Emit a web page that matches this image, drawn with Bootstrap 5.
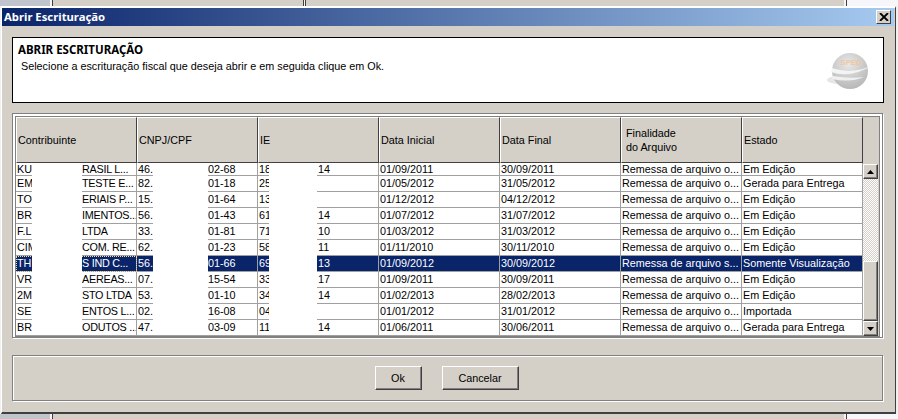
<!DOCTYPE html>
<html lang="pt-BR">
  <head>
    <meta charset="UTF-8" />
    <meta name="viewport" content="width=device-width, initial-scale=1" />
    <title>Abrir Escrituração</title>
    <link href="https://cdn.jsdelivr.net/npm/bootstrap@5.3.3/dist/css/bootstrap.min.css" rel="stylesheet" />
    <style>
      html, body { height: 419px; overflow: hidden; }
      body { background: #f0f0f0; font-family: "Liberation Sans", Arial, sans-serif; font-size: 10.8px; color: #000; }

      /* what is left of the app behind the dialog */
      .behind { height: 6px; }
      .behind-low { height: 5px; }
      .seg-blue { width: 50px; background: #c0c4cc; }
      .seg-light { width: 2px; background: #f4f4f4; }
      .seg-dark { width: 1px; background: #404040; }
      .seg-fill { width: 250px; background: #d4d0c8; }
      .seg-gap { width: 1px; background: #f4f4f4; }
      .seg-rest { flex: 1; background: #d4d0c8; }
      .seg-white { width: 51px; background: #f6f6fa; }

      .dlg { height: 408px; margin: 0 2px 0 1px; background: #d4d0c8; border-top: 2px solid #fff; border-right: 1px solid #404040; border-bottom: 2px solid #404040; border-left: 1px solid #fff; }
      .dlg-title { height: 18px; margin-right: 1px; background: linear-gradient(90deg, #0a246a, #a6caf0); padding-left: 2px; padding-right: 3px; }
      .dlg-title-text { color: #fff; font-family: "Noto Sans", sans-serif; font-weight: 700; font-size: 11.3px; line-height: 18px; }
      .btn-x { width: 15px; height: 14px; background: #d4d0c8; border: 1px solid; border-color: #fff #404040 #404040 #fff; }

      .dlg-body { padding: 11px 11px 0 10px; }

      .head-box { height: 66px; background: #fff; border: 1px solid #000; padding: 5px 5px 0; }
      .head-title { font-family: "Noto Sans", sans-serif; font-weight: 700; font-size: 11.5px; line-height: 14px; }
      .head-text { line-height: 14px; padding-left: 3px; margin-top: 2px; }
      .head-logo { width: 48px; height: 40px; margin: 8px 4px 0 0; }

      .grid-frame { margin: 10px 1px 0 0; height: 225px; border: 1px solid #808080; box-shadow: inset 1px 1px 0 #fff, 1px 1px 0 #fff; padding: 2px 2px 0; position: relative; background: #fff; }
      .grid-wrap { display: flex; height: 221px; background: #d4d0c8; border: 1px solid #808080; }
      .grid-tbl { table-layout: fixed; width: 847px; height: 219px; border-collapse: separate; border-spacing: 0; background: #fff; }
      .grid-tbl th { width: 121px; height: 46px; background: #d4d0c8; font-weight: 400; padding: 0 1px; border: 1px solid; border-color: #fff #404040 #404040 #fff; line-height: 14px; }
      .grid-tbl td { height: 16px; padding: 0 0 0 1px; line-height: 15px; border-right: 1px solid #a0a0a0; border-bottom: 1px solid #a0a0a0; white-space: nowrap; overflow: hidden; }
      .grid-tbl tr.first-row td { height: 13px; line-height: 4px; }
      .grid-tbl tr.sel td { background: #0a246a; color: #fff; }
      .grid-tbl tr.sel td:first-child { outline: 1px dotted #f5db95; outline-offset: -1px; }
      .cell-split { display: flex; justify-content: space-between; }
      .pre-a { padding-left: 1px; }
      .post-a { width: 54px; letter-spacing: -0.25px; }
      .post-b { width: 49px; }
      .post-c { width: 60px; }

      /* masked columns, they lie over the rows */
      .mask { position: absolute; top: 49px; height: 172px; background: #fff; }
      .mask-a { left: 19px; width: 50px; }
      .mask-b { left: 140px; width: 55px; }
      .mask-c { left: 256px; width: 48px; }

      .vscroll { width: 15px; margin-top: 47px; display: flex; flex-direction: column; }
      .vs-btn { height: 15px; flex: none; background: #d4d0c8; border: 1px solid; border-color: #fff #404040 #404040 #fff; box-shadow: inset -1px -1px 0 #808080; display: flex; align-items: center; justify-content: center; }
      .vs-track { height: 82px; flex: none; background-color: #fff; background-image: conic-gradient(#d4d0c8 25%, #fff 0 50%, #d4d0c8 0 75%, #fff 0); background-size: 2px 2px; }
      .vs-thumb { flex: 1; background: #d4d0c8; border: 1px solid; border-color: #fff #404040 #404040 #fff; box-shadow: inset -1px -1px 0 #808080; }

      .foot-box { margin: 17px 1px 0 0; height: 46px; padding-right: 2px; border: 1px solid #808080; box-shadow: inset 1px 1px 0 #fff, 1px 1px 0 #fff; gap: 20px; }
      .foot-btn { height: 24px; background: #d4d0c8; border: 1px solid; border-color: #fff #404040 #404040 #fff; border-radius: 0; padding: 0; font-size: 10.8px; color: #000; box-shadow: inset -1px -1px 0 #808080; }
      .foot-ok { width: 47px; }
      .foot-cancel { width: 77px; }
    </style>
  </head>
  <body>

    <div class="behind d-flex">
      <div class="seg-blue"></div><div class="seg-light"></div><div class="seg-dark"></div>
      <div class="seg-fill"></div><div class="seg-dark"></div><div class="seg-gap"></div><div class="seg-dark"></div>
      <div class="seg-rest"></div><div class="seg-light"></div><div class="seg-dark"></div><div class="seg-white"></div>
    </div>

    <div class="dlg">
      <!-- Title bar -->
      <div class="dlg-title d-flex align-items-center justify-content-between">
        <span class="dlg-title-text">Abrir Escrituração</span>
        <span class="btn-x d-flex align-items-center justify-content-center">
          <svg width="10" height="8" viewBox="0 0 10 8"><path d="M1 0 L9 8 M9 0 L1 8" stroke="#000" stroke-width="1.8" /></svg>
        </span>
      </div>

      <div class="dlg-body">
        <!-- Header box -->
        <div class="head-box d-flex justify-content-between">
          <div>
            <div class="head-title">ABRIR ESCRITURAÇÃO</div>
            <div class="head-text">Selecione a escrituração fiscal que deseja abrir e em seguida clique em Ok.</div>
          </div>
          <svg class="head-logo" viewBox="0 0 48 40">
            <defs>
              <radialGradient id="ball" cx="0.45" cy="0.3" r="0.75">
                <stop offset="0" stop-color="#e8e8e8" />
                <stop offset="1" stop-color="#b4b4b4" />
              </radialGradient>
            </defs>
            <ellipse cx="13" cy="29" rx="12" ry="4" fill="#e6e6e6" />
            <circle cx="24" cy="20" r="18" fill="url(#ball)" />
            <path d="M5 21 Q24 28 47 14 Q26 24 6 17 Z" fill="#f4f4f4" />
            <path d="M6 28 Q24 32 38 26 Q24 28 7 25 Z" fill="#f0f0f0" />
            <text x="25" y="14" text-anchor="middle" font-size="8" font-weight="700" font-style="italic" fill="#ecc9a0">SPED</text>
          </svg>
        </div>

        <!-- Grid -->
        <div class="grid-frame">
          <div class="grid-wrap">
            <table class="grid-tbl">
              <thead>
                <tr>
                  <th>Contribuinte</th><th>CNPJ/CPF</th><th>IE</th><th>Data Inicial</th><th>Data Final</th><th class="ps-1">Finalidade<br>do Arquivo</th><th>Estado</th>
                </tr>
              </thead>
              <tbody id="rows"></tbody>
            </table>
            <div class="vscroll">
              <div class="vs-btn"><svg width="7" height="4" viewBox="0 0 7 4"><path d="M3.5 0 L7 4 H0 Z" /></svg></div>
              <div class="vs-track"></div>
              <div class="vs-thumb"></div>
              <div class="vs-btn"><svg width="7" height="4" viewBox="0 0 7 4"><path d="M0 0 H7 L3.5 4 Z" /></svg></div>
            </div>
          </div>
          <div class="mask mask-a"></div>
          <div class="mask mask-b"></div>
          <div class="mask mask-c"></div>
        </div>

        <!-- Buttons -->
        <div class="foot-box d-flex align-items-center justify-content-center">
          <button class="foot-btn foot-ok" type="button">Ok</button>
          <button class="foot-btn foot-cancel" type="button">Cancelar</button>
        </div>
      </div>
    </div>

    <div class="behind-low d-flex">
      <div class="seg-blue"></div><div class="seg-light"></div><div class="seg-dark"></div>
      <div class="seg-rest"></div><div class="seg-light"></div><div class="seg-dark"></div><div class="seg-white"></div>
    </div>

    <script>
      const data = [
        ["KU", "RASIL L...", "46.", "02-68", "18", "14", "01/09/2011", "30/09/2011", "Remessa de arquivo o...", "Em Edição"],
        ["EM", "TESTE E...", "82.", "01-18", "25", "", "01/05/2012", "31/05/2012", "Remessa de arquivo o...", "Gerada para Entrega"],
        ["TO", "ERIAIS P...", "15.", "01-64", "13", "", "01/12/2012", "04/12/2012", "Remessa de arquivo o...", "Em Edição"],
        ["BR", "IMENTOS...", "56.", "01-43", "61", "14", "01/07/2012", "31/07/2012", "Remessa de arquivo o...", "Em Edição"],
        ["F.L", "LTDA", "33.", "01-81", "71", "10", "01/03/2012", "31/03/2012", "Remessa de arquivo o...", "Em Edição"],
        ["CIM", "COM. RE...", "62.", "01-23", "58", "11", "01/11/2010", "30/11/2010", "Remessa de arquivo o...", "Em Edição"],
        ["TH", "S IND C...", "56.", "01-66", "69", "13", "01/09/2012", "30/09/2012", "Remessa de arquivo s...", "Somente Visualização"],
        ["VR", "AEREAS...", "07.", "15-54", "33", "17", "01/09/2011", "30/09/2011", "Remessa de arquivo o...", "Em Edição"],
        ["2M", "STO LTDA", "53.", "01-10", "34", "14", "01/02/2013", "28/02/2013", "Remessa de arquivo o...", "Em Edição"],
        ["SE", "ENTOS L...", "02.", "16-08", "04", "", "01/01/2012", "31/01/2012", "Remessa de arquivo o...", "Importada"],
        ["BR", "ODUTOS ...", "47.", "03-09", "11", "14", "01/06/2011", "30/06/2011", "Remessa de arquivo o...", "Gerada para Entrega"]
      ];
      const split = (a, b, cls) => `<div class="cell-split"><span>${a}</span><span class="${cls}">${b}</span></div>`;
      document.getElementById("rows").innerHTML = data.map((r, i) => `
        <tr class="${i === 6 ? "sel" : ""} ${i === 0 ? "first-row" : ""}">
          <td>${split(r[0], r[1], "post-a")}</td>
          <td>${split(r[2], r[3], "post-b")}</td>
          <td>${split(r[4], r[5], "post-c")}</td>
          <td>${r[6]}</td><td>${r[7]}</td><td>${r[8]}</td><td>${r[9]}</td>
        </tr>`).join("");
    </script>
    <script src="https://cdn.jsdelivr.net/npm/bootstrap@5.3.3/dist/js/bootstrap.bundle.min.js"></script>
  </body>
</html>
